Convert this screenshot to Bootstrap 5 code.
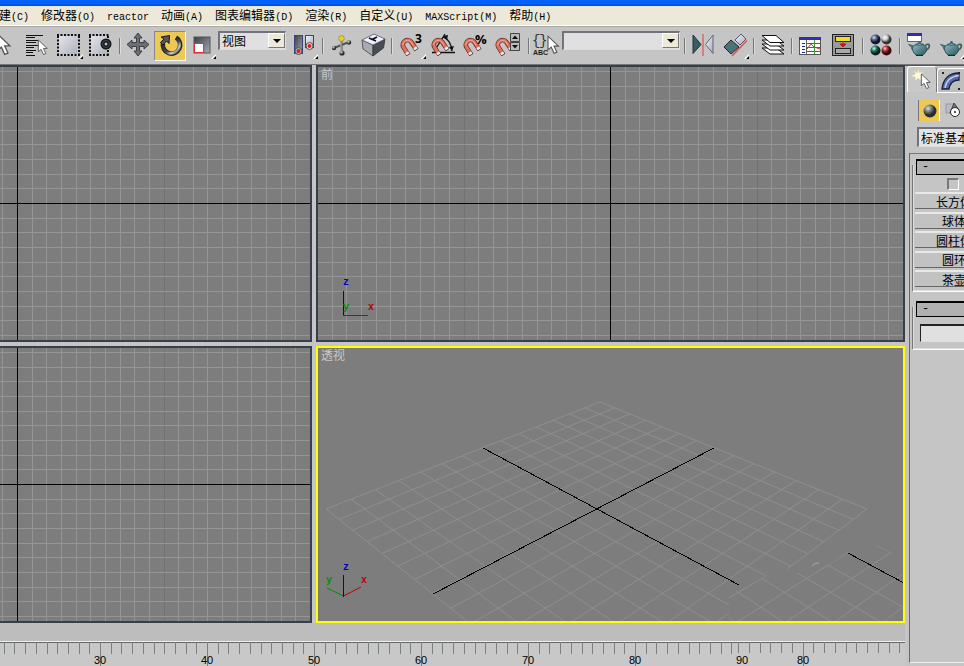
<!DOCTYPE html>
<html lang="zh-CN">
<head>
<meta charset="utf-8">
<meta name="viewport" content="width=device-width, initial-scale=1">
<title>3D 视图</title>
<link href="https://cdn.jsdelivr.net/npm/bootstrap@5.3.0/dist/css/bootstrap.min.css" rel="stylesheet">
<style>
body{font:12px/18px "Liberation Sans","Noto Sans CJK SC",sans-serif;background:#c5c5c5;color:#000;overflow:hidden}
.titlebar{height:6px;background:linear-gradient(#0060f8 60%,#0046d0)}
.menubar{height:20px;background:#ece9d8;gap:12px;border-bottom:1px solid #fff;white-space:nowrap;margin-left:-1px}
.menubar a{color:#000;text-decoration:none;line-height:20px}
.latin{font-family:"Liberation Mono",monospace;font-size:10px}
.toolbar{height:39px;padding-top:4px;border-top:1px solid #aaa;border-bottom:1px solid #777;background:#c5c5c5}
.strip{margin-left:-15px}
.tool{width:32px;height:30px;padding:0;border:0;background:none;flex:none}
.wide .tool{width:33px}
.tool svg,.tab svg,.kind svg{display:block}
.tool.pressed{background:#efc854;border:1px solid #888;border-right-color:#fff;border-bottom-color:#fff}
.tool.pressed svg{margin:-1px}
.divider{width:5px;height:16px;flex:none;margin-top:7px;border-left:2px solid transparent}
.divider::before{content:"";display:block;width:2px;height:16px;border-left:1px solid #777;border-right:1px solid #ddd}
.combo{border:2px solid #70747a;border-right-color:#ddd;border-bottom-color:#ddd;border-right-width:1px;border-bottom-width:1px;background:#e0e0e0;height:19px;flex:none}
.combo select{appearance:none;border:0;background:transparent;padding:0 0 0 2px;min-width:0;font:12px/16px "Noto Sans CJK SC",sans-serif;color:#000}
.combo .drop{width:17px;margin:0 0 1px;border:1px solid #fff;border-right-color:#777;border-bottom-color:#777;background:#ece9d8}
.combo .drop::before{content:"";border:4px solid transparent;border-top-color:#000;border-bottom:0}
.view-combo{width:68px;margin-right:2px}
.set-combo{width:118px;margin:0 2px 0 -1px}
.stage{background:#c5c5c5}
.views{display:grid;grid-template-columns:312fr 589fr;grid-template-rows:1fr 1fr;gap:4px;background:#c5c5c5}
.view{border:2px solid #363f4b;background:#7d7d7d;min-width:0;min-height:0;position:relative;overflow:hidden}
.view.cut{border-left:0}
.view.active{border-color:#ff0}
.view>svg{position:absolute;inset:0;width:100%;height:100%}
.view-name{position:absolute;left:3px;top:-1px;color:#c8c8c8}
.slider-band{height:18px;background:#bdbdbd}
.ruler{height:25px;background:#c8c8c8;border-top:1px solid #eee}
.ruler svg{display:block;width:100%;height:24px}
.side{width:59px;overflow:hidden;flex:none;border-top:1px solid #555}
.side-inner{width:150px}
.tabs{height:26px;padding-left:2px}
.tab{width:30px;height:26px;padding:0;border:1px solid #fff;border-right-color:#777;border-bottom:0;background:#c8c8c8;border-radius:4px 4px 0 0}
.tab+.tab{height:25px;margin-top:2px;border-bottom:1px solid #fff;background:#bebebe}
.kinds{padding:8px 0 0 13px}
.kind{width:22px;height:21px;padding:0;border:0;background:none}
.kind.pressed{background:#efc854;border-left:1px solid #777;border-right:1px solid #fff}
.type-combo{margin:6px 0 0 12px;height:20px;width:130px;background:#e4e4e4}
.rollouts{margin:6px 0 0 4px;padding:3px 0 0 2px;border-left:1px solid #666;border-top:1px solid #777}
.tail{margin-left:4px;border-left:1px solid #666;border-bottom:1px solid #eee;margin-bottom:3px}
.roll{position:relative;padding-bottom:5px;margin-bottom:7px}
.roll::before{content:"";position:absolute;inset:8px 0 0 0;border-left:1px solid #777;border-bottom:1px solid #fff;box-shadow:inset 1px -1px 0 #ddd}
.roll>*{position:relative}
.roll-head{height:16px;margin-left:4px;width:130px;border:1px solid #000;border-top-width:2px;background:#b1b1b1;text-align:left;padding:0 0 0 5px;font:12px/12px "Liberation Mono",monospace}
.auto{margin:3px 0 0 35px;height:12px}
.auto input{appearance:none;width:12px;height:12px;border:2px solid #777;border-right:1px solid #fff;border-bottom:1px solid #fff;margin:0}
.makers{height:95px;padding-left:3px;margin-top:2px}
.maker{width:78px;height:17px;padding:0;border:0;border-top:2px solid #e8e8e8;border-bottom:1px solid #666;background:#c2c2c2;font:12px/13px "Noto Sans CJK SC",sans-serif;color:#000}
.name-box{display:block;margin:7px 0 3px 8px;height:18px;width:100px;border:2px solid #222;border-left-width:1px;border-right-color:#ddd;border-bottom:1px solid #ddd;background:#e0e0e0;border-radius:0;padding:0 3px}
.axis{font:10px "Liberation Mono",monospace;font-weight:bold}
</style>
<script src="https://cdn.jsdelivr.net/npm/bootstrap@5.3.0/dist/js/bootstrap.bundle.min.js"></script>
</head>
<body class="d-flex flex-column vh-100">
<svg width="0" height="0" class="position-absolute" aria-hidden="true">
<defs>
<linearGradient id="dark" x2="1" y2="1"><stop stop-color="#3a3d42"/><stop offset="1" stop-color="#a8acb2"/></linearGradient>
<linearGradient id="light" x2="1" y2="1"><stop stop-color="#f4f4ff"/><stop offset="1" stop-color="#a5aaba"/></linearGradient>
<linearGradient id="teal" x2="1" y2="1"><stop stop-color="#8cc0c4"/><stop offset="1" stop-color="#28555d"/></linearGradient>
<linearGradient id="steel" y2="1" x2="1"><stop stop-color="#222"/><stop offset=".55" stop-color="#444"/><stop offset=".75" stop-color="#ccc"/><stop offset="1" stop-color="#333"/></linearGradient>
<radialGradient id="ballGray" cx=".35" cy=".3"><stop stop-color="#ddd"/><stop offset=".5" stop-color="#7c8282"/><stop offset="1" stop-color="#2c2c2c"/></radialGradient>
<radialGradient id="ballBlue" cx=".35" cy=".3"><stop stop-color="#dde"/><stop offset=".5" stop-color="#56618c"/><stop offset="1" stop-color="#101428"/></radialGradient>
<radialGradient id="ballWhite" cx=".35" cy=".3"><stop stop-color="#fff"/><stop offset=".5" stop-color="#ccc"/><stop offset="1" stop-color="#333"/></radialGradient>
<radialGradient id="ballGreen" cx=".35" cy=".3"><stop stop-color="#cfe"/><stop offset=".5" stop-color="#237c68"/><stop offset="1" stop-color="#04231c"/></radialGradient>
<radialGradient id="ballRed" cx=".35" cy=".3"><stop stop-color="#fcc"/><stop offset=".5" stop-color="#ad3038"/><stop offset="1" stop-color="#32080a"/></radialGradient>
<symbol id="pointer" viewBox="0 0 10 16" overflow="visible"><path d="M0 0V12.500L3 10L5.500 15.500L8 14.500L5.500 9H9.500Z" fill="#fff" stroke="#555" stroke-width="1"/></symbol>
<symbol id="magnet" viewBox="0 0 20 20" overflow="visible"><path d="M7.500 18L2.300 9.900A4.700 4.700 0 0 1 10.200 4.900L15.600 13" fill="none" stroke="#5a2d28" stroke-width="4.600"/><path d="M7 17.200L2.300 9.900A4.700 4.700 0 0 1 10.200 4.900L15 12.200" fill="none" stroke="#e5705c" stroke-width="3.200"/><path d="M1.800 8C2 4 6.500 2.500 9.500 4.500L12 8" fill="none" stroke="#ffab98"/><path d="M5.700 15.300L7 17.400M13.800 10.300L15.200 12.400" stroke="#eee" stroke-width="3.400"/></symbol>
<symbol id="flyout" viewBox="0 0 4 4" overflow="visible"><path d="M-1 4L4-1V4Z" fill="#fff"/><path d="M1 4L4 1V4Z" fill="#000"/></symbol>
<symbol id="teapot" viewBox="0 0 22 15" overflow="visible"><path d="M17 4C22 1.500 22.500 7 16 10" fill="none" stroke="#34626a" stroke-width="1.800"/><path d="M0 3.500L4 4.500L6 10L3.500 8.500L2.500 5.500Z" fill="#4c868d" stroke="#244a50" stroke-width=".7"/><path d="M5 4.500Q11 1.500 17 4.500C19.500 9 17 12.500 14.500 14H7.500C4.500 12 3 8 5 4.500Z" fill="url(#teal)" stroke="#244a50" stroke-width=".8"/><path d="M7 3.300Q11 1 15 3.300L11 4.500Z" fill="#79aeb3" stroke="#244a50" stroke-width=".7"/><circle cx="11" cy="1.300" r="1.300" fill="#34626a"/><path d="M7.500 14.500H14.500" stroke="#222"/></symbol>
</defs></svg>

<div class="titlebar flex-shrink-0"></div>
<nav class="menubar d-flex flex-shrink-0">
<a href="#">建<span class="latin">(C)</span></a><a href="#">修改器<span class="latin">(O)</span></a><a href="#"><span class="latin">reactor</span></a><a href="#">动画<span class="latin">(A)</span></a><a href="#">图表编辑器<span class="latin">(D)</span></a><a href="#">渲染<span class="latin">(R)</span></a><a href="#">自定义<span class="latin">(U)</span></a><a href="#"><span class="latin">MAXScript(M)</span></a><a href="#">帮助<span class="latin">(H)</span></a>
</nav>

<div class="toolbar flex-shrink-0 overflow-hidden">
<div class="strip d-flex">
<div class="d-flex wide">
<button class="tool" aria-label="选择"><svg width="32" height="30"><use href="#pointer" x="12" y="3" width="14" height="21"/></svg></button>
<button class="tool" aria-label="按名称选择"><svg width="32" height="30"><path d="M8 4.500H25M8 6.500H17M8 9.500H20M8 11.500H18M8 14.500H20M8 16.500H16M8 19.500H18M8 21.500H15M8 24.500H17" stroke="#111"/><use href="#pointer" x="20" y="9" width="10" height="15"/></svg></button>
<button class="tool" aria-label="选择区域"><svg width="32" height="30"><rect x="8" y="5" width="18" height="18" fill="url(#light)" opacity=".65"/><path d="M6 4H29M6 24H29M7 5V25M28 5V25" fill="none" stroke="#111" stroke-width="2" stroke-dasharray="2 1.500"/><use href="#flyout" x="28" y="24" width="4" height="4"/></svg></button>
<button class="tool" aria-label="窗口交叉"><svg width="32" height="30"><rect x="7" y="5" width="16" height="18" fill="url(#light)" opacity=".65"/><path d="M5 4H25M5 24H25M6 5V25M24 5V25" stroke="#111" stroke-width="2" stroke-dasharray="2 1.500"/><circle cx="22" cy="13" r="5.500" fill="#15171c"/><circle cx="22" cy="13" r="1.500" fill="#bbb"/><circle cx="22" cy="13" r="3.500" fill="none" stroke="#454a55"/></svg></button>
</div>
<span class="divider"></span>
<button class="tool" aria-label="移动"><svg width="32" height="30"><path d="M16 2L20 7H17.500V11.500H22V9L27 13.500L22 18V15.500H17.500V20H20L16 25L12 20H14.500V15.500H10V18L5 13.500L10 9V11.500H14.500V7H12Z" fill="#6b6e74" stroke="#34363a" stroke-width=".9"/></svg></button>
<button class="tool pressed" aria-label="旋转"><svg width="32" height="30"><path d="M22 6.500A8.700 8.700 0 1 1 9 12" fill="none" stroke="#24262a" stroke-width="4.500"/><path d="M23 8A8.300 8.300 0 1 1 9 13.500" fill="none" stroke="url(#steel)" stroke-width="2.500"/><path d="M7 6L15.500 4.500L15 12.500L12.500 10L9 14L6.500 11.500L10 8Z" fill="#555" stroke="#1b1b1b"/></svg></button>
<button class="tool" aria-label="缩放"><svg width="32" height="30"><rect x="8" y="6" width="16" height="16" fill="url(#dark)" stroke="#555"/><rect x="8.500" y="12.500" width="9" height="9" fill="#fff" stroke="#d33"/><use href="#flyout" x="26" y="24" width="4" height="4"/></svg></button>
<div class="combo view-combo d-flex"><select class="flex-grow-1" aria-label="参考坐标系"><option>视图</option></select><span class="drop d-flex align-items-center justify-content-center"></span></div>
<button class="tool" aria-label="轴心"><svg width="32" height="30"><rect x="6.500" y="4.500" width="8" height="18" fill="url(#dark)" stroke="#39427a"/><rect x="17.500" y="4.500" width="8" height="12" fill="url(#light)" stroke="#39427a"/><circle cx="10.500" cy="20" r="3.500" fill="#aaa" stroke="#555"/><circle cx="21.500" cy="15" r="3.500" fill="#ddd" stroke="#555"/><circle cx="10.500" cy="20" r="2" fill="#e02020"/><circle cx="21.500" cy="15" r="2" fill="#e02020"/><use href="#flyout" x="26" y="24" width="4" height="4"/></svg></button>
<span class="divider"></span>
<button class="tool" aria-label="操纵"><svg width="32" height="30"><path d="M16.500 8V22M9 17L24 11" stroke="#555" stroke-width="2"/><path d="M16 8V22" stroke="#ccc"/><circle cx="16.500" cy="7.500" r="2.800" fill="#e8d231" stroke="#8a7a10" stroke-width=".6"/><circle cx="9" cy="17" r="2.200" fill="url(#ballGray)"/><circle cx="24" cy="11.500" r="2.200" fill="url(#ballGray)"/><circle cx="17" cy="22" r="2.600" fill="url(#ballGray)"/></svg></button>
<button class="tool" aria-label="键盘快捷键"><svg width="32" height="30"><path d="M5 9L16 14V25L6 18Z" fill="#a8aab6" stroke="#444" stroke-width=".8"/><path d="M16 14L28 8L26.500 17L16 25Z" fill="#4a4c55" stroke="#333" stroke-width=".8"/><path d="M5 9L17 3L28 8L16 14Z" fill="#eef" stroke="#555" stroke-width=".8"/><path d="M12 7L19 10M15 8.500L20 6" stroke="#111" stroke-width="1.600"/></svg></button>
<span class="divider"></span>
<div class="d-flex wide">
<button class="tool" aria-label="捕捉开关"><svg width="32" height="30"><use href="#magnet" x="7" y="6" width="20" height="20"/><text x="21" y="12" font-family="Open Sans" font-weight="bold" font-size="12">3</text><use href="#flyout" x="28" y="24" width="4" height="4"/></svg></button>
<button class="tool" aria-label="角度捕捉"><svg width="32" height="30"><path d="M5 21.500H28M8 19L18 3M16 6Q24 9 25 20" fill="none" stroke="#111" stroke-width="1.300"/><path d="M16 5L21 4L20 9ZM22 16L27 15L25 20Z" fill="#111"/><use href="#magnet" x="5" y="6" width="20" height="20"/></svg></button>
<button class="tool" aria-label="百分比捕捉"><svg width="32" height="30"><use href="#magnet" x="4" y="6" width="20" height="20"/><text x="15" y="13" font-family="Open Sans" font-weight="bold" font-size="13">%</text></svg></button>
<button class="tool" aria-label="微调器捕捉"><svg width="32" height="30"><use href="#magnet" x="3" y="6" width="20" height="20"/><path d="M17.500 2.500H26.500V10.500H17.500ZM17.500 11.500H26.500V19.500H17.500Z" fill="#bbb" stroke="#444"/><path d="M19 8L22 4.500L25 8ZM19 14L22 17.500L25 14Z" fill="#111"/></svg></button>
</div>
<span class="divider"></span>
<button class="tool" aria-label="命名选择集"><svg width="32" height="30"><text x="1" y="14" font-family="Liberation Mono" font-size="14" fill="#333">{</text><text x="8" y="14" font-family="Liberation Mono" font-size="14" fill="#333">}</text><text x="2" y="24" font-family="Liberation Sans" font-weight="bold" font-size="7" fill="#222">ABC</text><use href="#pointer" x="17" y="5" width="11" height="18"/></svg></button>
<div class="combo set-combo d-flex"><select class="flex-grow-1" aria-label="命名选择集列表"><option></option></select><span class="drop d-flex align-items-center justify-content-center"></span></div>
<span class="divider"></span>
<button class="tool" aria-label="镜像"><svg width="32" height="30"><path d="M6 4L14 13.500L6 22.500Z" fill="#355d65" stroke="#233"/><path d="M26 4L18.500 13.500L26 22.500Z" fill="url(#light)" stroke="#667"/><path d="M16 3V25" stroke="#d66" stroke-width="1.500"/></svg></button>
<button class="tool" aria-label="对齐"><svg width="32" height="30"><path d="M5 16L12 9L20 16L12 23Z" fill="#4a747c" stroke="#223"/><path d="M16 9L22 3L27 8L21 14Z" fill="url(#light)" stroke="#556"/><path d="M13 25L28 9.500" stroke="#e05050" stroke-width="1.500"/><use href="#flyout" x="26" y="24" width="4" height="4"/></svg></button>
<span class="divider"></span>
<div class="d-flex wide">
<button class="tool" aria-label="层管理器"><svg width="32" height="30"><g fill="#fff" stroke="#111"><path d="M6 17H20L28 23H14Z"/><path d="M6 13H20L28 19H14Z"/><path d="M6 9H20L28 15H14Z"/><path d="M6 4.500H20L28 11.500H14Z"/></g></svg></button>
<span class="divider"></span>
<button class="tool" aria-label="曲线编辑器"><svg width="32" height="30"><rect x="5.500" y="6.500" width="21" height="17" fill="#fff" stroke="#555"/><path d="M5 7.500H27" stroke="#372bb5" stroke-width="3"/><path d="M8 12.500H11M8 15.500H11M8 18.500H11M8 21.500H11" stroke="#228"/><path d="M12.500 9V23M13 12.500H26M13 16.500H26M13 20.500H26" stroke="#333" stroke-width=".8"/><path d="M13 18L17 13L20 16L26 18" fill="none" stroke="#c33"/><path d="M20.500 9V23" stroke="#393"/></svg></button>
<button class="tool" aria-label="图解视图"><svg width="32" height="30"><rect x="5.500" y="3.500" width="21" height="21" fill="#9a9a9a" stroke="#222"/><rect x="8.500" y="5.500" width="15" height="5" fill="#f0dc30" stroke="#222"/><rect x="8.500" y="17.500" width="15" height="5" fill="#aaa" stroke="#222"/><path d="M16 10V13M13 13H19L16 16Z" fill="#c01818" stroke="#c01818"/></svg></button>
</div>
<span class="divider"></span>
<button class="tool" aria-label="材质编辑器"><svg width="32" height="30"><circle cx="10.500" cy="8.500" r="5" fill="url(#ballBlue)"/><circle cx="21.500" cy="8.500" r="5" fill="url(#ballWhite)"/><circle cx="10.500" cy="19.500" r="5" fill="url(#ballGreen)"/><circle cx="21.500" cy="19.500" r="5" fill="url(#ballRed)"/></svg></button>
<span class="divider"></span>
<button class="tool" aria-label="渲染场景"><svg width="32" height="30"><use href="#teapot" x="6" y="10" width="23" height="15"/><rect x="5.500" y="2.500" width="14" height="8" fill="#fff" stroke="#666"/><path d="M5 3.500H20" stroke="#372bb5" stroke-width="3"/></svg></button>
<button class="tool" aria-label="快速渲染"><svg width="32" height="30"><use href="#teapot" x="6" y="10" width="23" height="15"/><use href="#flyout" x="27" y="24" width="4" height="4"/></svg></button>
</div>
</div>

<div class="stage d-flex flex-grow-1 overflow-hidden">
<main class="d-flex flex-column flex-grow-1 overflow-hidden">
<div class="views flex-grow-1">
<section class="view cut"><svg data-grid="17"></svg></section>
<section class="view"><svg data-grid="center" id="front"></svg><span class="view-name">前</span></section>
<section class="view cut"><svg data-grid="17"></svg></section>
<section class="view active"><svg id="persp"></svg><span class="view-name">透视</span></section>
</div>
<div class="slider-band"></div>
<div class="ruler"><svg id="ruler"></svg></div>
</main>
<aside class="side d-flex flex-column">
<div class="side-inner d-flex flex-column flex-grow-1">
<div class="tabs d-flex">
<button class="tab" aria-label="创建"><svg width="28" height="25"><path d="M10 2L11.500 6L15 4L13 8L17 9L13 10.500L13.500 14L10 11L7 14L7.500 10L3 9L7.500 7L6 3L9 6Z" fill="#fffbd8" stroke="#d8cfa0" stroke-width=".4"/><use href="#pointer" x="13" y="7" width="10" height="15"/></svg></button>
<button class="tab" aria-label="修改"><svg width="28" height="22"><path d="M4 19C5 9 11 3 21 3V10C15 10 12 13 11 19Z" fill="#576ba5" stroke="#16203c" stroke-width="1.300"/><path d="M7 18C8 11 13 6.500 21 5.500" fill="none" stroke="#bdc9f0" stroke-width="1.500"/><path d="M4 2h2v2H4zM20 2h2v2h-2zM20 18h2v2h-2z" fill="#222"/></svg></button>
</div>
<div class="kinds d-flex gap-1">
<button class="kind pressed" aria-label="几何体"><svg width="20" height="21"><circle cx="11" cy="11" r="6.500" fill="url(#ballGray)"/></svg></button>
<button class="kind" aria-label="图形"><svg width="22" height="21"><rect x="2" y="4" width="9" height="9" fill="#b8bac8" stroke="#99a"/><path d="M6 13L10 3L15 10Z" fill="#778" stroke="#444"/><circle cx="11" cy="12" r="4.500" fill="#fff" stroke="#222"/><circle cx="11" cy="12" r="1" fill="#222"/></svg></button>
</div>
<div class="combo type-combo d-flex"><select class="flex-grow-1" aria-label="对象类别"><option>标准基本体</option></select></div>
<div class="rollouts">
<section class="roll">
<button class="roll-head">-</button>
<div class="auto"><input type="checkbox" class="d-block" aria-label="自动栅格"></div>
<div class="makers d-flex flex-column justify-content-between">
<button class="maker">长方体</button><button class="maker">球体</button><button class="maker">圆柱体</button><button class="maker">圆环</button><button class="maker">茶壶</button>
</div>
</section>
<section class="roll mb-0">
<button class="roll-head">-</button>
<input class="name-box" type="text" aria-label="名称">
</section>
</div>
<div class="tail flex-grow-1"></div>
</div>
</aside>
</div>

<script>
const NS = "http://www.w3.org/2000/svg";
function add(parent, name, attrs, text) {
  const el = document.createElementNS(NS, name);
  for (const k in attrs) el.setAttribute(k, attrs[k]);
  if (text) el.textContent = text;
  parent.appendChild(el);
  return el;
}
function line(p, x1, y1, x2, y2, stroke, extra) {
  return add(p, "line", Object.assign({x1, y1, x2, y2, stroke}, extra));
}
const label = (p, x, y, fill, t) => add(p, "text", {x, y, fill, class: "axis"}, t);

function orthoGrid(svg) {
  const w = svg.clientWidth, h = svg.clientHeight, step = 14.65;
  const ox = svg.dataset.grid === "center" ? Math.floor(w / 2) : +svg.dataset.grid;
  const oy = Math.floor(h / 2);
  const at = (o, k) => Math.round(o + k * step) + .5;
  const tone = k => k === 0 ? "#000" : k % 10 ? "#959595" : "#727272";
  const ks = Array.from({length: 161}, (_, i) => i - 80).sort((a, b) => Math.abs(b) - Math.abs(a));
  for (const k of ks) {
    const x = at(ox, k), y = at(oy, k);
    if (x > 0 && x < w) line(svg, x, 0, x, h, tone(k));
    if (y > 0 && y < h) line(svg, 0, y, w, y, tone(k));
  }
}

/* Projective map of the unit square onto four corners */
function projector(a, b, c, d) {
  const dx1 = b[0]-c[0], dx2 = d[0]-c[0], sx = a[0]-b[0]+c[0]-d[0];
  const dy1 = b[1]-c[1], dy2 = d[1]-c[1], sy = a[1]-b[1]+c[1]-d[1];
  const det = dx1*dy2 - dx2*dy1, g = (sx*dy2 - dx2*sy)/det, h = (dx1*sy - sx*dy1)/det;
  return (u, v) => {
    const w = g*u + h*v + 1;
    return [((b[0]-a[0]+g*b[0])*u + (d[0]-a[0]+h*d[0])*v + a[0])/w,
            ((b[1]-a[1]+g*b[1])*u + (d[1]-a[1]+h*d[1])*v + a[1])/w];
  };
}
function groundPlane(svg) {
  const map = projector([8,161], [282,54], [549,161], [271,370]);
  const defs = add(svg, "defs", {});
  const clip = (id, pts) => add(add(defs, "clipPath", {id}), "polygon", {points: pts});
  clip("planeMain", "0,0 600,0 600,190 465,222 421,236 411,244 411,274 0,274");
  clip("planeSide", "411,274 411,246 452,226 475,226 512,216 530,204 558,197 574,205 586,230 586,274");
  const draw = (group) => {
    for (let i = 0; i <= 14; i++) {
      const t = i / 14;
      for (const [p, q] of [[map(t,0), map(t,1)], [map(0,t), map(1,t)]])
        line(group, p[0], p[1], q[0], q[1], "#8f8f8f");
    }
  };
  draw(add(svg, "g", {"clip-path": "url(#planeMain)"}));
  draw(add(add(svg, "g", {"clip-path": "url(#planeSide)"}), "g", {transform: "translate(168 -1)"}));
  const crisp = {"shape-rendering": "crispEdges"};
  line(svg, 165, 100, 421, 237, "#000", crisp);
  line(svg, 115, 246, 396, 100, "#000", crisp);
  line(svg, 530, 205, 586, 235, "#000", crisp);
  add(svg, "path", {d: "M494 218q3-4 7-3", fill: "none", stroke: "#aaa"});
  line(svg, 25.5, 248, 43, 239, "#c00000");
  line(svg, 25.5, 248, 9, 240, "#009000");
  line(svg, 25.5, 227, 25.5, 249, "#0000b0");
  label(svg, 25, 222, "#0000c0", "z");
  label(svg, 43, 235, "#c00000", "x");
  label(svg, 8, 235, "#009000", "y");
}
function frontAxes(svg) {
  const y = svg.clientHeight - 25;
  line(svg, 25, y + .5, 50, y + .5, "#c00000");
  line(svg, 25.5, y - 24, 25.5, y, "#0000b0");
  label(svg, 25, y - 30, "#0000c0", "z");
  label(svg, 50, y - 5, "#b00000", "x");
  label(svg, 25, y - 5, "#009000", "y");
}
function timeRuler(svg) {
  const w = svg.clientWidth;
  line(svg, 0, .5, w, .5, "#666");
  const text = (x, t) => add(svg, "text", {x, y: 22, "text-anchor": "middle", "font-family": "Liberation Sans", "font-size": 11}, t);
  for (let k = -9; k < 60; k++) {
    const x = Math.round(100 + k * 10.7) + .5;
    line(svg, x, 0, x, k % 10 ? 12 : 24, "#7b8080");
  }
  for (let k = 0; k < 16; k++) {
    const x = Math.round(738 + k * 10.75) + .5;
    line(svg, x, 0, x, k === 6 ? 24 : 11, "#7b8080");
  }
  for (let n = 30; n <= 90; n += 10) text(100 + (n - 30) * 10.7, n);
  text(803, "80");
}
document.querySelectorAll("[data-grid]").forEach(orthoGrid);
frontAxes(document.getElementById("front"));
groundPlane(document.getElementById("persp"));
timeRuler(document.getElementById("ruler"));
</script>
</body>
</html>
